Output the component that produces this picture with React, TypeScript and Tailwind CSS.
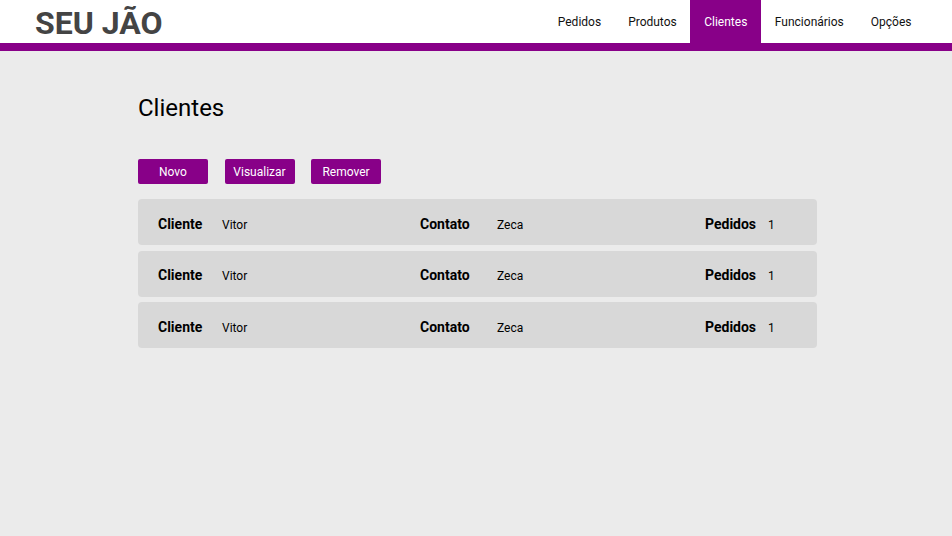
export default function App() {
  const rows = [
    { cliente: "Vitor", contato: "Zeca", pedidos: 1 },
    { cliente: "Vitor", contato: "Zeca", pedidos: 1 },
    { cliente: "Vitor", contato: "Zeca", pedidos: 1 },
  ];
  const nav = ["Pedidos", "Produtos", "Clientes", "Funcionários", "Opções"];

  return (
    <div className="min-h-screen bg-[#ebebeb] text-black" style={{ fontFamily: "Roboto, 'Liberation Sans', sans-serif" }}>
      {/* Header */}
      <header className="bg-white border-b-[8px] border-[#880088]">
        <div className="h-[43px] flex items-center justify-between pl-[35px] pr-[27px]">
          <div className="text-[32px] font-bold text-[#444444] leading-none pt-[2px]">SEU JÃO</div>
          <nav className="flex h-full text-[12px] text-[#111]">
            {nav.map((item) => (
              <div
                key={item}
                className={
                  item === "Clientes"
                    ? "h-full flex items-center px-[14px] pt-[1px] bg-[#880088] text-white"
                    : "h-full flex items-center px-[13.5px] pt-[1px]"
                }
              >
                {item}
              </div>
            ))}
          </nav>
        </div>
      </header>

      {/* Content */}
      <main className="w-[679px] ml-[138px] pt-[42px]">
        <h1 className="text-[24px] leading-[30px] font-normal">Clientes</h1>

        <div className="flex gap-[16.5px] mt-[36px]">
          {["Novo", "Visualizar", "Remover"].map((b) => (
            <button key={b} className="w-[70px] h-[25px] rounded-[2px] bg-[#880088] text-white text-[12px] pt-[1px]">
              {b}
            </button>
          ))}
        </div>

        <div className="flex flex-col gap-[5.5px] mt-[15px]">
          {rows.map((r, i) => (
            <div key={i} className="h-[46px] rounded-[4px] bg-[#d8d8d8] flex items-center pl-[20px] pt-[4px]">
              <div className="w-[262px] flex items-baseline">
                <span className="w-[64px] text-[14px] font-bold">Cliente</span>
                <span className="text-[12px]">{r.cliente}</span>
              </div>
              <div className="w-[285px] flex items-baseline">
                <span className="w-[77px] text-[14px] font-bold">Contato</span>
                <span className="text-[12px]">{r.contato}</span>
              </div>
              <div className="flex items-baseline">
                <span className="w-[63px] text-[14px] font-bold">Pedidos</span>
                <span className="text-[12px]">{r.pedidos}</span>
              </div>
            </div>
          ))}
        </div>
      </main>
    </div>
  );
}
